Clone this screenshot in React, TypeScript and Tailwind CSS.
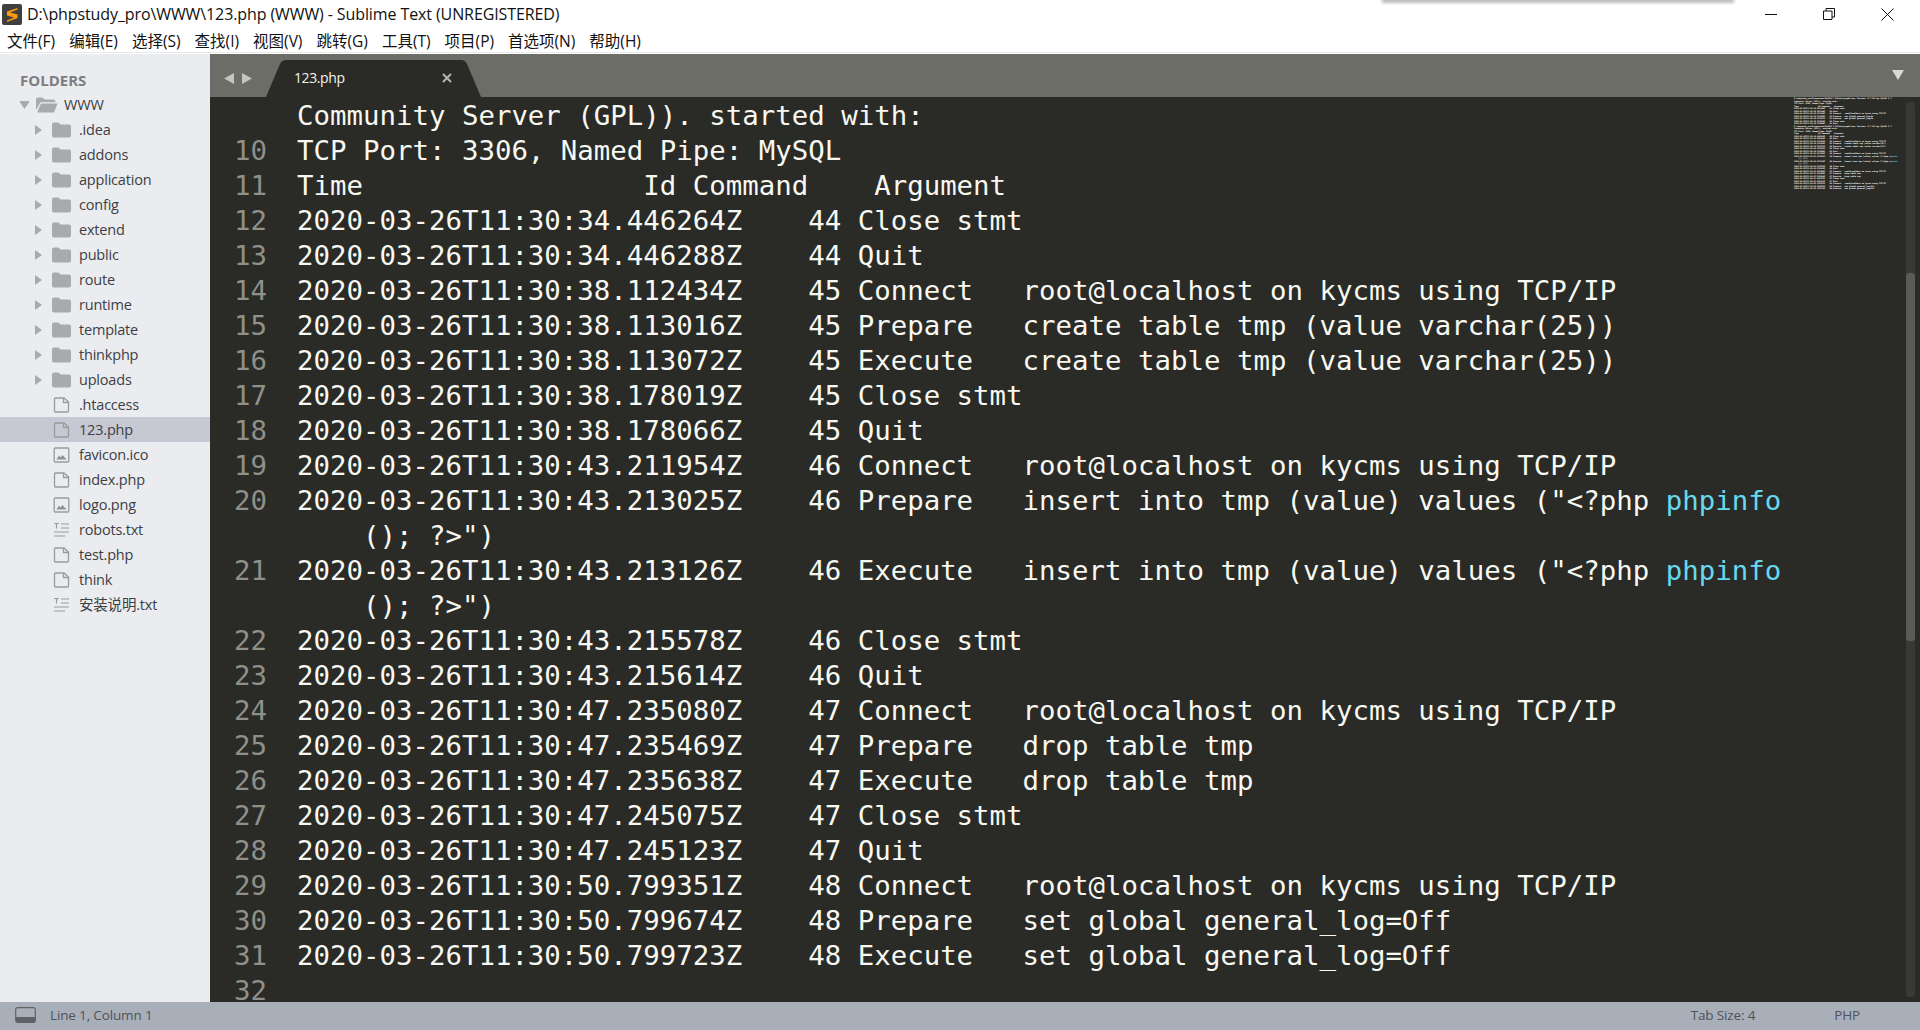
import React from "react";

const sans = "[font-family:'Open_Sans','Noto_Sans_CJK_SC',sans-serif]";

type Entry = { name: string; kind: "folder" | "file" | "image" | "text"; selected?: boolean };

const entries: Entry[] = [
  { name: ".idea", kind: "folder" },
  { name: "addons", kind: "folder" },
  { name: "application", kind: "folder" },
  { name: "config", kind: "folder" },
  { name: "extend", kind: "folder" },
  { name: "public", kind: "folder" },
  { name: "route", kind: "folder" },
  { name: "runtime", kind: "folder" },
  { name: "template", kind: "folder" },
  { name: "thinkphp", kind: "folder" },
  { name: "uploads", kind: "folder" },
  { name: ".htaccess", kind: "file" },
  { name: "123.php", kind: "file", selected: true },
  { name: "favicon.ico", kind: "image" },
  { name: "index.php", kind: "file" },
  { name: "logo.png", kind: "image" },
  { name: "robots.txt", kind: "text" },
  { name: "test.php", kind: "file" },
  { name: "think", kind: "file" },
  { name: "安装说明.txt", kind: "text" },
];

const menus = ["文件(F)", "编辑(E)", "选择(S)", "查找(I)", "视图(V)", "跳转(G)", "工具(T)", "项目(P)", "首选项(N)", "帮助(H)"];

const connect = "Connect   root@localhost on kycms using TCP/IP";

const rows: { n?: number; text: string; fn?: boolean }[] = [
  { text: "Community Server (GPL)). started with:" },
  { n: 10, text: "TCP Port: 3306, Named Pipe: MySQL" },
  { n: 11, text: "Time                 Id Command    Argument" },
  { n: 12, text: "2020-03-26T11:30:34.446264Z    44 Close stmt" },
  { n: 13, text: "2020-03-26T11:30:34.446288Z    44 Quit" },
  { n: 14, text: `2020-03-26T11:30:38.112434Z    45 ${connect}` },
  { n: 15, text: "2020-03-26T11:30:38.113016Z    45 Prepare   create table tmp (value varchar(25))" },
  { n: 16, text: "2020-03-26T11:30:38.113072Z    45 Execute   create table tmp (value varchar(25))" },
  { n: 17, text: "2020-03-26T11:30:38.178019Z    45 Close stmt" },
  { n: 18, text: "2020-03-26T11:30:38.178066Z    45 Quit" },
  { n: 19, text: `2020-03-26T11:30:43.211954Z    46 ${connect}` },
  { n: 20, text: '2020-03-26T11:30:43.213025Z    46 Prepare   insert into tmp (value) values ("<?php ', fn: true },
  { text: '    (); ?>")' },
  { n: 21, text: '2020-03-26T11:30:43.213126Z    46 Execute   insert into tmp (value) values ("<?php ', fn: true },
  { text: '    (); ?>")' },
  { n: 22, text: "2020-03-26T11:30:43.215578Z    46 Close stmt" },
  { n: 23, text: "2020-03-26T11:30:43.215614Z    46 Quit" },
  { n: 24, text: `2020-03-26T11:30:47.235080Z    47 ${connect}` },
  { n: 25, text: "2020-03-26T11:30:47.235469Z    47 Prepare   drop table tmp" },
  { n: 26, text: "2020-03-26T11:30:47.235638Z    47 Execute   drop table tmp" },
  { n: 27, text: "2020-03-26T11:30:47.245075Z    47 Close stmt" },
  { n: 28, text: "2020-03-26T11:30:47.245123Z    47 Quit" },
  { n: 29, text: `2020-03-26T11:30:50.799351Z    48 ${connect}` },
  { n: 30, text: "2020-03-26T11:30:50.799674Z    48 Prepare   set global general_log=Off" },
  { n: 31, text: "2020-03-26T11:30:50.799723Z    48 Execute   set global general_log=Off" },
  { n: 32, text: "" },
];

// rows of the file above the visible part, only seen in the minimap
const header = [
  "D:\\phpstudy_pro\\Extensions\\MySQL5.7.26\\bin\\mysqld.exe, Version: 5.7.26-log (MySQL 5.7",
  "Community Server (GPL)). started with:",
  "TCP Port: 3306, Named Pipe: MySQL",
  "Time                 Id Command    Argument",
  "2020-03-26T11:30:30.101264Z    43 Close stmt",
  "2020-03-26T11:30:30.101288Z    43 Quit",
  `2020-03-26T11:30:30.112434Z    43 ${connect}`,
  "2020-03-26T11:30:30.113016Z    43 Prepare   set global general_log=On",
  "2020-03-26T11:30:30.113072Z    43 Execute   set global general_log=On",
  "2020-03-26T11:30:30.178019Z    43 Close stmt",
  "2020-03-26T11:30:30.178066Z    43 Quit",
  "D:\\phpstudy_pro\\Extensions\\MySQL5.7.26\\bin\\mysqld.exe, Version: 5.7.26-log (MySQL 5.7",
];

function Arrow({ open }: { open?: boolean }) {
  return (
    <svg width="9" height="12" viewBox="0 0 9 12" className="shrink-0">
      {open ? <path d="M-1 2H10L4.5 10Z" fill="#a9aaac" /> : <path d="M1 1L8 6L1 11Z" fill="#a9aaac" />}
    </svg>
  );
}

function EntryIcon({ kind }: { kind: Entry["kind"] }) {
  if (kind === "folder") {
    return (
      <svg width="19" height="16" viewBox="0 0 19 16">
        <path d="M0 2.5Q0 .5 2 .5H6.5L8.5 2.5H17Q19 2.5 19 4.5V13.5Q19 15.5 17 15.5H2Q0 15.5 0 13.5Z" fill="#a9aaac" />
      </svg>
    );
  }
  if (kind === "file") {
    return (
      <svg width="17" height="16" viewBox="0 0 17 16" fill="none" stroke="#999a9c" strokeWidth="1.3">
        <path d="M1.5 2Q1.5 1 2.5 1H11L15.5 5V14Q15.5 15 14.5 15H2.5Q1.5 15 1.5 14Z" />
        <path d="M10.5 1V5.5H15.5" />
      </svg>
    );
  }
  if (kind === "image") {
    return (
      <svg width="17" height="16" viewBox="0 0 17 16">
        <rect x="1.2" y="1" width="14.6" height="14" rx="1" fill="none" stroke="#999a9c" strokeWidth="1.3" />
        <path d="M3.5 12.5L6 8.5L7.5 10.5L9.5 8L13.5 12.5Z" fill="#8f9092" />
      </svg>
    );
  }
  return (
    <svg width="17" height="16" viewBox="0 0 17 16" fill="none" stroke="#999a9c" strokeWidth="1.2">
      <path d="M1 1.5H6M3.5 1.5V6.5M8 2H16M8 6H16M1 10H16M1 14H12" />
    </svg>
  );
}

function FileRow({ entry }: { entry: Entry }) {
  return (
    <div className={`flex h-[25px] items-center ${entry.selected ? "bg-[#c6c9d3]" : ""}`}>
      <div className="flex w-[36px] justify-end">
        {entry.kind === "folder" && (
          <div className="mr-[-7px]">
            <Arrow />
          </div>
        )}
      </div>
      <div className="ml-[15px] flex w-[20px] justify-center">
        <EntryIcon kind={entry.kind} />
      </div>
      <span className="ml-[8px] text-[14.5px] tracking-[-0.2px] text-[#3d3f45]">{entry.name}</span>
    </div>
  );
}

function Sidebar() {
  return (
    <aside className="w-[210px] shrink-0 bg-[#ebecef] pt-[16px]">
      <div className="ml-[20px] h-[22px] text-[15px] leading-[20px] font-bold text-[#7d7e82]">FOLDERS</div>
      <div className="flex h-[25px] items-center pl-[20px]">
        <Arrow open />
        <svg width="22" height="16" viewBox="0 0 22 16" className="ml-[7px]">
          <path d="M0 2.5Q0 .5 2 .5H6.5L8.5 2.5H17.5Q19.5 2.5 19.5 4.5V5.2H4.5L.8 12H0Z" fill="#a9aaac" />
          <path d="M5 6.5H21.5L18 15.5H1Z" fill="#a9aaac" />
        </svg>
        <span className="ml-[6px] text-[14.5px] tracking-[-0.2px] text-[#3d3f45]">WWW</span>
      </div>
      {entries.map((e) => (
        <FileRow key={e.name} entry={e} />
      ))}
    </aside>
  );
}

function TabBar() {
  return (
    <div className="flex h-[43px] shrink-0 items-end bg-[#6c6d67]">
      <div className="mb-[13px] ml-[14px] flex w-[28px] items-center justify-between self-end">
        <svg width="10" height="11" viewBox="0 0 10 11">
          <path d="M10 0V11L0 5.5Z" fill="#c4c4c1" />
        </svg>
        <svg width="10" height="11" viewBox="0 0 10 11">
          <path d="M0 0V11L10 5.5Z" fill="#c4c4c1" />
        </svg>
      </div>
      <div className={`relative ml-[14px] flex h-[37px] w-[215px] items-center ${sans}`}>
        <svg width="215" height="37" viewBox="0 0 215 37" className="absolute inset-0">
          <path d="M0 37L14 4Q16 0 20 0H195Q199 0 201 4L215 37Z" fill="#2a2b26" />
        </svg>
        <span className="relative mb-[2px] ml-[28px] text-[14px] tracking-[-0.4px] text-[#f2f2ee]">123.php</span>
        <svg width="10" height="10" viewBox="0 0 10 10" className="relative mb-[1px] ml-[97px]">
          <path d="M1 1L9 9M9 1L1 9" stroke="#b4b4b1" strokeWidth="2" />
        </svg>
      </div>
      <div className="flex-1" />
      <svg width="12" height="10" viewBox="0 0 12 10" className="mr-[16px] mb-[17px]">
        <path d="M0 0H12L6 10Z" fill="#d8d8d5" />
      </svg>
    </div>
  );
}

function Editor() {
  return (
    <div className="relative min-h-0 flex-1 overflow-hidden bg-[#2a2b26] pt-px">
      {rows.map((r, i) => (
        <div key={i} className="flex h-[35px] items-center [font-family:'DejaVu_Sans_Mono',monospace] text-[27.4px] whitespace-pre">
          <span className="w-[57px] shrink-0 text-right text-[#8f908a]">{r.n ?? ""}</span>
          <span className="ml-[30px] text-[#f8f8f2]">
            {r.text}
            {r.fn && <span className="text-[#66d9ef]">phpinfo</span>}
          </span>
        </div>
      ))}

      {/* minimap */}
      <div className="absolute top-0 left-[1584px] [font-family:'DejaVu_Sans_Mono',monospace] text-[1.92px] leading-[2.5px] font-bold whitespace-pre text-white">
        {header.map((t, i) => (
          <div key={i} className="h-[2.5px]">
            {t}
          </div>
        ))}
        {rows.map((r, i) => (
          <div key={i} className="h-[2.5px]">
            {r.text}
            {r.fn && <span className="text-[#66d9ef]">phpinfo</span>}
          </div>
        ))}
      </div>

      {/* scrollbar */}
      <div className="absolute top-[5px] right-[5px] bottom-[5px] w-[9px] rounded-[3px] bg-[#383935]">
        <div className="mt-[171px] h-[368px] rounded-[3px] bg-[#5a5b56]" />
      </div>
    </div>
  );
}

export default function App() {
  return (
    <div className={`relative flex h-[1030px] w-[1920px] flex-col overflow-hidden bg-white ${sans}`}>
      {/* title bar */}
      <div className="flex h-[31px] shrink-0 items-center pb-[3px]">
        <svg width="20" height="21" viewBox="0 0 20 21" className="ml-[2px]">
          <rect width="20" height="21" rx="2" fill="#403f3d" />
          <path d="M15.5 4L5 7.5V11.5L12 13.5L5 16.5V18L15.5 14V10.5L8 8.5L15.5 5.5Z" fill="#ff9a0d" />
        </svg>
        <span className="ml-[5px] text-[16px] tracking-[-0.1px] text-[#111]">
          {"D:\\phpstudy_pro\\WWW\\123.php (WWW) - Sublime Text (UNREGISTERED)"}
        </span>
        <div className="ml-auto flex pr-[4px]">
          <div className="flex h-[28px] w-[58px] items-center justify-center">
            <svg width="12" height="12" viewBox="0 0 12 12">
              <path d="M0 6.5H12" stroke="#111" />
            </svg>
          </div>
          <div className="flex h-[28px] w-[58px] items-center justify-center">
            <svg width="12" height="12" viewBox="0 0 12 12" fill="none" stroke="#111">
              <path d="M.5 3H9V11.5H.5Z" />
              <path d="M3 3V.5H11.5V9H9" />
            </svg>
          </div>
          <div className="flex h-[28px] w-[58px] items-center justify-center">
            <svg width="13" height="13" viewBox="0 0 13 13">
              <path d="M.5 .5L12.5 12.5M12.5 .5L.5 12.5" stroke="#111" />
            </svg>
          </div>
        </div>
      </div>

      {/* menu bar */}
      <div className="flex h-[21px] shrink-0 items-center gap-[14px] pl-[7px] text-[15.5px] tracking-[0] text-[#111]">
        {menus.map((m) => (
          <span key={m}>{m}</span>
        ))}
      </div>

      {/* main area */}
      <div className="flex min-h-0 flex-1 border-t border-[#e8e8e8] pt-px">
        <Sidebar />
        <div className="flex min-w-0 flex-1 flex-col">
          <TabBar />
          <Editor />
        </div>
      </div>

      {/* status bar */}
      <div className="flex h-[28px] shrink-0 items-center bg-[#a9afb9] pb-[2px] text-[13.5px] tracking-[-0.15px] text-[#4e5259]">
        <svg width="21" height="16" viewBox="0 0 21 16" className="ml-[15px]">
          <rect x=".7" y=".7" width="19.6" height="14.6" rx="2" fill="none" stroke="#5f6368" strokeWidth="1.2" />
          <path d="M1 10H20V13.5Q20 15 18.5 15H2.5Q1 15 1 13.5Z" fill="#5f6368" />
        </svg>
        <span className="ml-[14px]">Line 1, Column 1</span>
        <span className="ml-auto">Tab Size: 4</span>
        <span className="mr-[60px] ml-[79px]">PHP</span>
      </div>

      {/* shadow of another window */}
      <div className="absolute top-[-2px] left-[1382px] h-[5px] w-[352px] bg-[#bbbbbb] blur-[1.5px]" />
    </div>
  );
}
